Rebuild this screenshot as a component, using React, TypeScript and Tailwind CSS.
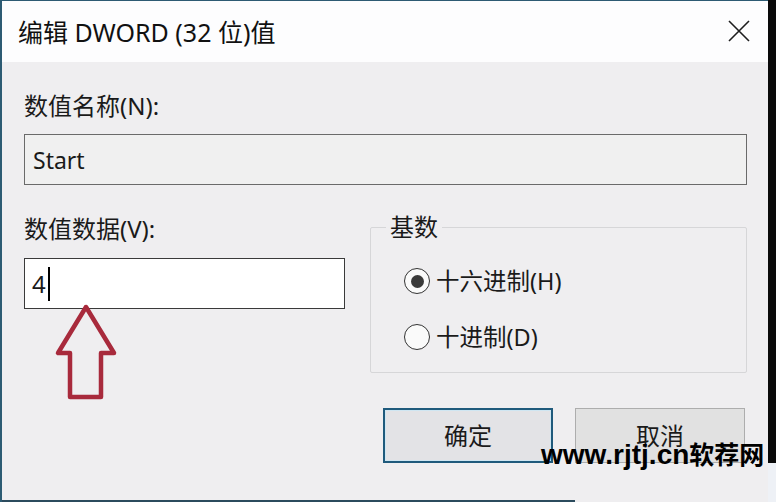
import React from "react";

const font = "font-['Noto_Sans','Noto_Sans_CJK_SC',sans-serif]";

function Radio({ checked, label }: { checked: boolean; label: string }) {
  return (
    <div className="flex items-center h-[28px]">
      <div className="w-[26px] h-[26px] rounded-full border-[1.5px] border-[#333] bg-[#fafafa] flex items-center justify-center">
        {checked && <div className="w-[13px] h-[13px] rounded-full bg-[#3a3a3a]" />}
      </div>
      <span className="ml-[6px] text-[23.5px] leading-[28px] text-[#1a1a1a]">{label}</span>
    </div>
  );
}

export default function App() {
  return (
    <div className={`relative w-[776px] h-[502px] overflow-hidden bg-[#eef1f6] flex ${font}`}>
      <div className="w-[768px] h-[502px] flex flex-col border-l-2 border-t border-[#2d5b73] bg-[#efeef0]">
        <div className="h-[61px] bg-[#fdfdfe] flex items-center justify-between pl-[16px] pr-[18px]">
          <span className="text-[25px] leading-[30px] text-[#111] mt-[1px]">编辑 DWORD (32 位)值</span>
          <svg width="22" height="22" viewBox="0 0 22 22" className="mt-[-1px]">
            <path d="M1 1 L21 21 M21 1 L1 21" stroke="#1e1e1e" strokeWidth="1.6" fill="none" />
          </svg>
        </div>
        <div className="flex-1 flex flex-col pl-[22px] pr-[21px] pt-[30px]">
          <div className="text-[24px] leading-[28px] text-[#1a1a1a]">数值名称(N):</div>
          <div className="mt-[14px] h-[51px] border-[1.5px] border-[#6a6a6a] bg-[#f0f0f0] flex items-center pl-[8px]">
            <span className="text-[23px] leading-[28px] text-[#1a1a1a]">Start</span>
          </div>
          <div className="mt-[30px] flex items-start">
            <div className="w-[321px] flex flex-col">
              <div className="text-[24px] leading-[28px] text-[#1a1a1a]">数值数据(V):</div>
              <div className="mt-[15px] h-[51px] border-[1.5px] border-[#3a3a3a] bg-white flex items-center pl-[7px]">
                <span className="text-[24px] leading-[28px] text-[#1a1a1a]">4</span>
                <div className="ml-[2px] w-[2px] h-[34px] bg-black" />
              </div>
            </div>
            <fieldset className="ml-[25px] w-[377px] h-[158px] border border-[#d6d6d8] rounded-[2px] pl-[33px]">
              <legend className="ml-[-18px] px-[4px] text-[24px] leading-[24px] text-[#1a1a1a]">基数</legend>
              <div className="pt-[28px] flex flex-col gap-[28px]">
                <Radio checked label="十六进制(H)" />
                <Radio checked={false} label="十进制(D)" />
              </div>
            </fieldset>
          </div>
          <div className="mt-[35px] flex justify-end gap-[22px] pr-[2px]">
            <div className="w-[170px] h-[55px] border-2 border-[#1f5a7c] bg-[#e3e3e6] flex items-center justify-center shadow-[inset_0_0_0_1px_#cfe6f2]">
              <span className="text-[24px] leading-[28px] text-[#1a1a1a]">确定</span>
            </div>
            <div className="w-[170px] h-[55px] border border-[#adadad] bg-[#e1e1e1] flex items-center justify-center">
              <span className="text-[24px] leading-[28px] text-[#1a1a1a]">取消</span>
            </div>
          </div>
        </div>
        <div className="w-[573px] h-[2px] bg-[#2b4b5d]" />
      </div>
      <div className="w-[8px] h-[463px] bg-[#0a0a0a]" />

      <svg className="absolute left-0 top-0 pointer-events-none" width="776" height="502" viewBox="0 0 776 502">
        <path
          d="M86 307 L58 353 L70 353 L70 397 L101 397 L101 353 L114 353 Z"
          fill="none"
          stroke="#a82a3c"
          strokeWidth="4.5"
          strokeLinejoin="round"
        />
      </svg>

      <div className="absolute left-[541px] top-[436px] flex items-baseline font-bold text-black leading-[34px]">
        <span className="font-['Liberation_Sans',sans-serif] text-[28px]">www.rjtj.cn</span>
        <span className="font-['Noto_Sans_CJK_SC',sans-serif] text-[25px]">软荐网</span>
      </div>
    </div>
  );
}
